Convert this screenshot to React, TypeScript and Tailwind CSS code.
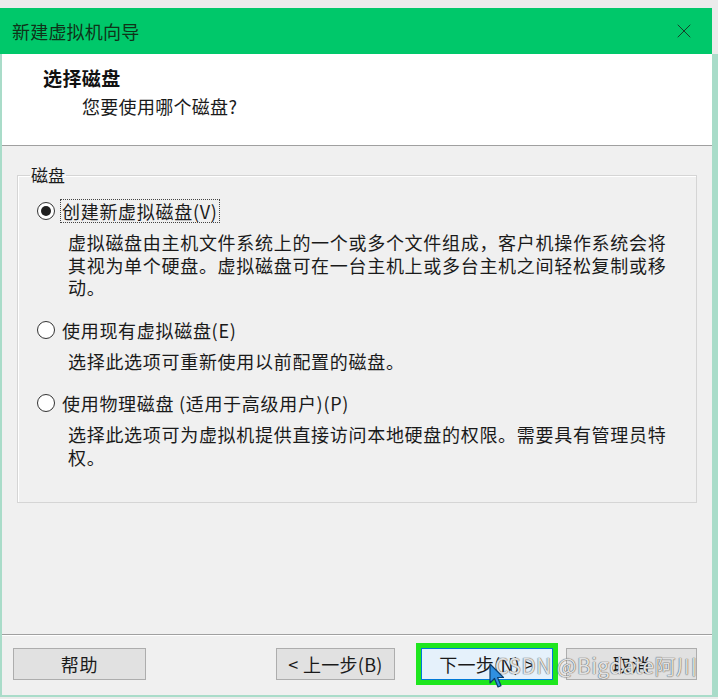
import { X } from "lucide-react";

const font = { fontFamily: '"Noto Sans CJK SC", "Noto Sans", sans-serif' };

function Radio({ checked }: { checked?: boolean }) {
  return (
    <span className="flex items-center justify-center w-[18px] h-[18px] rounded-full border-[1.5px] border-[#333333] bg-white shrink-0">
      {checked && <span className="w-[10px] h-[10px] rounded-full bg-[#1f1f1f]" />}
    </span>
  );
}

function Option({
  label,
  lines,
  checked,
  focused,
}: {
  label: string;
  lines: string[];
  checked?: boolean;
  focused?: boolean;
}) {
  return (
    <div className="flex flex-col">
      <div className="flex items-center h-[24px] pl-[19px] gap-[6px]">
        <Radio checked={checked} />
        <span
          className={
            focused
              ? "px-[1px] leading-[22px] outline outline-1 outline-dotted outline-[#444444]"
              : "px-[1px] leading-[22px]"
          }
        >
          {label}
        </span>
      </div>
      <div className="mt-[8px] pl-[50px] pr-[20px] leading-[22.5px]">
        {lines.map((l, i) => (
          <div key={i}>{l}</div>
        ))}
      </div>
    </div>
  );
}

function Cursor() {
  return (
    <svg width="16" height="26" viewBox="0 0 16 26" className="absolute left-[489px] top-[663px]">
      <path
        d="M1 1 L1 20 L5.5 15.5 L9 24 L12 22.8 L8.6 14.5 L14.5 14.5 Z"
        fill="#2f8fe0"
        stroke="#0b3d6e"
        strokeWidth="1.2"
        strokeLinejoin="round"
      />
    </svg>
  );
}

export default function App() {
  return (
    <div
      className="relative w-[718px] h-[699px] bg-[#ebebeb] pt-[8px] overflow-hidden text-[18px] tracking-[0.7px] text-[#1a1a1a]"
      style={font}
    >
      {/* Title bar */}
      <div className="flex items-center justify-between w-[712px] h-[46px] bg-[#00c86a] pl-[12px] pr-[16px]">
        <span className="text-[18px] tracking-[0.2px] text-[#0f3319]">新建虚拟机向导</span>
        <X size={24} strokeWidth={1} className="text-[#17402a]" />
      </div>

      {/* Window body */}
      <div className="flex flex-col w-[718px] h-[643px] border-l-2 border-r-[6px] border-b-2 border-[#a9dcc9] bg-[#f0f0f0]">
        {/* Header */}
        <div className="h-[92px] bg-white border-b border-[#a0a0a0] pl-[41px] pt-[12px]">
          <div className="font-bold text-[19px] leading-[24px] tracking-[0.4px] text-[#111111]">选择磁盘</div>
          <div className="pl-[39px] mt-[4px] leading-[24px] tracking-[0.3px]">您要使用哪个磁盘?</div>
        </div>

        {/* Group box */}
        <fieldset className="mx-[15px] mt-[18px] w-[680px] border border-[#d5d5d5] shadow-[inset_1px_1px_0_#ffffff] pb-[34px] pt-[1px]">
          <legend className="ml-[12px] px-[1px] text-[17px] tracking-[0px] leading-[22px]">磁盘</legend>
          <div className="flex flex-col gap-[19px] mt-[12px]">
            <Option
              checked
              focused
              label="创建新虚拟磁盘(V)"
              lines={[
                "虚拟磁盘由主机文件系统上的一个或多个文件组成，客户机操作系统会将",
                "其视为单个硬盘。虚拟磁盘可在一台主机上或多台主机之间轻松复制或移",
                "动。",
              ]}
            />
            <Option label="使用现有虚拟磁盘(E)" lines={["选择此选项可重新使用以前配置的磁盘。"]} />
            <Option
              label="使用物理磁盘 (适用于高级用户)(P)"
              lines={[
                "选择此选项可为虚拟机提供直接访问本地硬盘的权限。需要具有管理员特",
                "权。",
              ]}
            />
          </div>
        </fieldset>

        <div className="flex-1" />

        {/* Footer */}
        <div className="border-t border-[#a0a0a0] shadow-[inset_0_1px_0_#ffffff] flex items-center h-[61px] pl-[11px] pr-[15px] pb-[2px]">
          <button className="w-[133px] h-[32px] bg-[#e1e1e1] border border-[#adadad] text-[18px]">帮助</button>
          <div className="flex-1" />
          <button className="w-[119px] h-[32px] bg-[#e1e1e1] border border-[#adadad] text-[18px] tracking-[0.3px]">
            &lt; 上一步(B)
          </button>
          <button className="ml-[26px] w-[132px] h-[32px] bg-[#e5f1fb] border border-[#0078d7] outline outline-[5px] outline-[#1ee61e] text-[18px] tracking-[0.3px]">
            下一步(N) &gt;
          </button>
          <button className="ml-[13px] w-[131px] h-[32px] bg-[#e1e1e1] border border-[#adadad] text-[18px]">取消</button>
        </div>
      </div>

      {/* Watermark */}
      <div className="absolute left-[495px] top-[651px] text-[21px] tracking-[0.4px] leading-[28px] text-[#f4f4f4]/90 [text-shadow:0_0_1px_#555,0_0_1px_#555] pointer-events-none">
        CSDN @Bigdate阿川
      </div>
      <Cursor />
    </div>
  );
}
